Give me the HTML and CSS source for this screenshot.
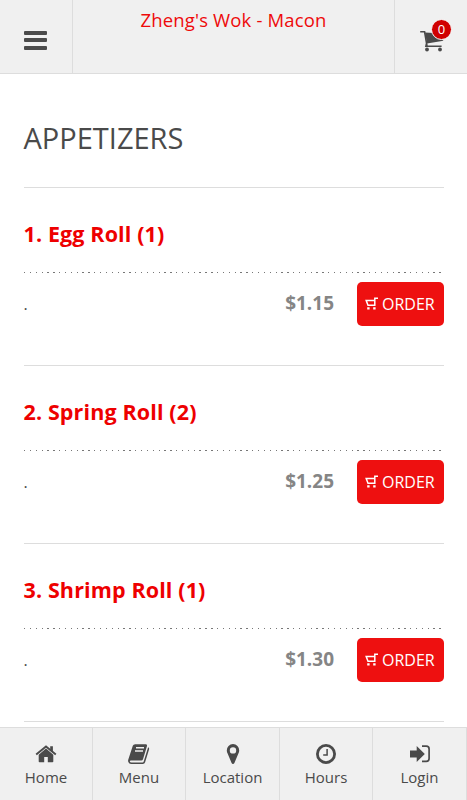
FILE: index.html
```html
<!DOCTYPE html>
<html lang="en">
<head>
<meta charset="utf-8">
<title>Zheng's Wok - Macon</title>
<link rel="stylesheet" href="styles.css">
</head>
<body>
<svg class="defs" aria-hidden="true">
  <symbol id="mini-cart" viewBox="0 0 13 13"><path d="M13 1.2H9.8V8.2H3L1.2 3.6H9.4" fill="none" stroke="currentColor" stroke-width="1.5"/><path d="M2.2 10.2h2.4v2.2H2.2zM8.2 10.2h2.4v2.2H8.2z" fill="currentColor"/></symbol>
</svg>
<div class="app">
  <header class="topbar">
    <button class="topbar-side menu-button" aria-label="Menu"><span class="bars"><i></i><i></i><i></i></span></button>
    <h1 class="title"><span>Zheng's Wok - Macon</span></h1>
    <button class="topbar-side cart-button" aria-label="Cart">
      <svg width="25" height="22" viewBox="0 0 25 22"><path d="M5 2.5 14 3l9.5 7.8L7 13.4z" fill="#4a4a4a"/><path d="M.2 1.8H4.6L7 15.8M6.6 13.2 5.9 16.2H21.6" fill="none" stroke="#4a4a4a" stroke-width="1.6"/><circle cx="7" cy="19.5" r="1.9" fill="#4a4a4a"/><circle cx="20" cy="19.5" r="1.9" fill="#4a4a4a"/></svg>
      <span class="badge">0</span>
    </button>
  </header>
  <main class="content">
    <h2 class="heading"><span>APPETIZERS</span></h2>
    <section class="item">
      <h3 class="name"><span>1. Egg Roll (1)</span></h3>
      <div class="dots"></div>
      <div class="row"><span class="desc">.</span><span class="price">$1.15</span><button class="order"><svg width="13" height="13"><use href="#mini-cart"/></svg><span>ORDER</span></button></div>
    </section>
    <section class="item">
      <h3 class="name"><span>2. Spring Roll (2)</span></h3>
      <div class="dots"></div>
      <div class="row"><span class="desc">.</span><span class="price">$1.25</span><button class="order"><svg width="13" height="13"><use href="#mini-cart"/></svg><span>ORDER</span></button></div>
    </section>
    <section class="item">
      <h3 class="name"><span>3. Shrimp Roll (1)</span></h3>
      <div class="dots"></div>
      <div class="row"><span class="desc">.</span><span class="price">$1.30</span><button class="order"><svg width="13" height="13"><use href="#mini-cart"/></svg><span>ORDER</span></button></div>
    </section>
    <div class="item end"></div>
  </main>
  <nav class="tabs">
    <a class="tab"><svg width="22" height="20" viewBox="0 0 22 20"><path d="M11 4.6 18.3 10.8V17.5q0 .8-.8.8H12.8V13H9.2v5.3H4.5q-.8 0-.8-.8V10.8z" fill="currentColor"/><path d="M1.2 10.6 11 2.4l9.8 8.2" fill="none" stroke="currentColor" stroke-width="1.9"/><path d="M15.2 2.2h2.7v6l-2.7-2.3z" fill="currentColor"/></svg><span>Home</span></a>
    <a class="tab"><svg width="24" height="22" viewBox="0 0 24 22"><path d="M8.2 1.2h10.6q1.7 0 1.2 1.7l-4 13.3q-.4 1.3-1.8 1.3H4q-1.3.2-1.2 1.1.2.9 1.7.9h11.1q.8 0 1.1-.9L20.9 5l.2-.8q1.4.6 1 2l-4 13q-.5 1.8-2.3 1.8H4.1q-2 0-2.8-2-.5-1.2 0-2.5L5.8 2.7Q6.3 1.2 8.2 1.2z" fill="currentColor"/><path d="M9 4.8h8M8 7.9h8" stroke="#f0f0f0" stroke-width="1.5"/></svg><span>Menu</span></a>
    <a class="tab"><svg width="14" height="22" viewBox="0 0 14 22"><path fill-rule="evenodd" d="M7 1a6.2 6.2 0 0 1 6.2 6.4c0 1.2-.3 2.1-.7 2.9L8.4 20.1Q8 21 7 21t-1.4-.9L1.5 10.3C1.1 9.5.8 8.6.8 7.4A6.2 6.2 0 0 1 7 1zm0 3.2a3.2 3.2 0 1 0 0 6.4 3.2 3.2 0 0 0 0-6.4z" fill="currentColor"/></svg><span>Location</span></a>
    <a class="tab"><svg width="22" height="22" viewBox="0 0 22 22" fill="none" stroke="currentColor"><circle cx="11" cy="11" r="8.6" stroke-width="2.8"/><path d="M12.1 6v6H8.2" stroke-width="1.5"/></svg><span>Hours</span></a>
    <a class="tab"><svg width="22" height="20" viewBox="0 0 22 20"><path d="M1 6.6h6.7V2L15.8 10l-8.1 8v-4.6H1z" fill="currentColor"/><path d="M13 2.2h4.3q2.8 0 2.8 2.8v9.6q0 2.8-2.8 2.8H13" fill="none" stroke="currentColor" stroke-width="1.7"/></svg><span>Login</span></a>
  </nav>
</div>
</body>
</html>
```
FILE: styles.css
```css
* { box-sizing: border-box; }
body { margin: 0; background: #fff; font-family: "Open Sans", sans-serif; color: #4a4a4a; }
h1, h2, h3 { margin: 0; font-weight: 400; white-space: nowrap; }
button { border: 0; padding: 0; margin: 0; background: none; font-family: inherit; }
.defs { position: absolute; width: 0; height: 0; }
.app { width: 467px; height: 800px; overflow: hidden; display: flex; flex-direction: column; }
.topbar { display: flex; flex: none; height: 74px; background: #f0f0f0; border-bottom: 1px solid #ddd; }
.topbar-side { width: 73px; height: 73px; flex: none; display: flex; align-items: flex-start; }
.menu-button { border-right: 1px solid #ddd; padding: 30.6px 0 0 24px; }
.bars { display: grid; gap: 3.5px; }
.bars i { width: 23px; height: 4px; border-radius: 1px; background: #4a4a4a; }
.title { flex: 1; text-align: center; padding-top: 7px; font-size: 18.5px; letter-spacing: .16px; line-height: 26px; color: #ee0a0a; }
.cart-button { position: relative; border-left: 1px solid #ddd; padding: 29.5px 0 0 24.5px; }
.badge { position: absolute; left: 36px; top: 19px; width: 21px; height: 21px; border: 1px solid #f8f8f8; border-radius: 50%; background: #d00000; color: #fff; font-size: 13px; line-height: 19px; text-align: center; }
.content { flex: 1; min-height: 0; overflow: hidden; padding: 44px 23.5px 0 23.5px; }
.heading { height: 69px; font-size: 29px; line-height: 40px; color: #4a4a4a; }
.item { height: 178px; border-top: 1px solid #ddd; padding-top: 31px; }
.name { font-size: 21.5px; letter-spacing: .13px; line-height: 30px; font-weight: 700; color: #ee0000; }
.dots { height: 1px; margin-top: 22.5px; background: repeating-linear-gradient(90deg, #777 0 1.3px, transparent 1.3px 5.85px); }
.row { display: flex; align-items: center; margin-top: 9.5px; height: 43.5px; }
.desc { flex: 1; font-size: 16px; }
.price { font-size: 19px; line-height: 26px; font-weight: 700; color: #858585; margin: 0 23px 2px 0; }
.order { width: 86.5px; height: 43.5px; border-radius: 5px; background: #ee1010; color: #fff; display: flex; align-items: center; padding-left: 8px; gap: 4px; font-size: 16px; }
.tabs { flex: none; height: 73px; display: grid; grid-template-columns: 93px 93px 94px 93px 94px; background: #f0f0f0; border-top: 1px solid #ddd; }
.tab { display: grid; grid-template-rows: 26px 20px; align-content: start; justify-items: center; align-items: center; padding-top: 13px; border-right: 1px solid #ddd; color: #4a4a4a; font-size: 15px; line-height: 20px; }
```
